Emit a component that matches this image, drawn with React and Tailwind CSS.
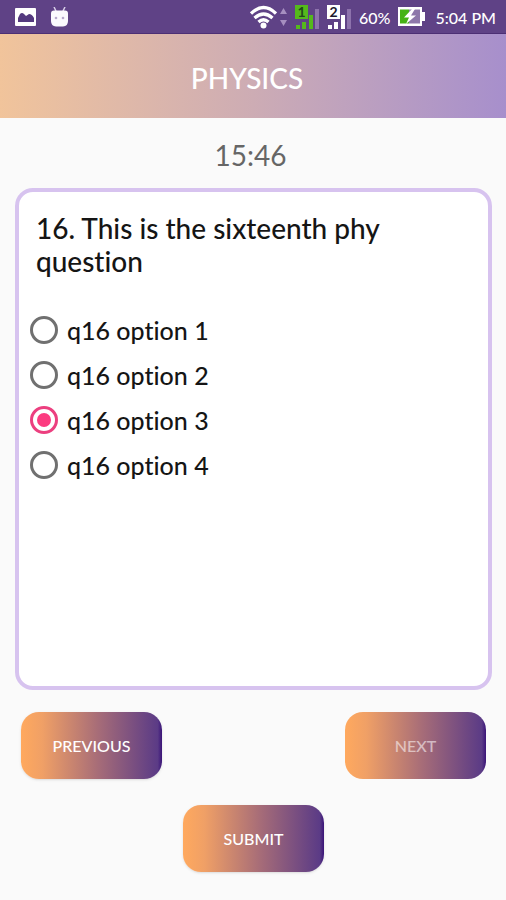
import { useState } from "react";

const OPTIONS = ["q16 option 1", "q16 option 2", "q16 option 3", "q16 option 4"];

function ImageIcon() {
  return (
    <svg className="h-[18px] w-[21px]" viewBox="0 0 21 18" aria-hidden="true">
      <rect width="21" height="18" rx="1" fill="#fff" />
      <path d="M3 14V10l2-4q2-2 4 0l2 2 3-2q3 0 5 4v4z" fill="#54397f" />
    </svg>
  );
}

function AndroidIcon() {
  return (
    <svg className="h-5 w-[17px]" viewBox="0 0 17 20" aria-hidden="true">
      <path d="M3 0l2 4M14 0l-2 4" stroke="#d9cfe8" strokeWidth="1.5" />
      <path d="M3 3.500h11q3 0 3 3V14q0 5-5 5.500H5q-5-.5-5-5.500V6.500q0-3 3-3z" fill="#fbf9fe" />
      <circle cx="5" cy="11" r="1.300" fill="#b7a8cc" />
      <circle cx="12" cy="11" r="1.300" fill="#b7a8cc" />
    </svg>
  );
}

function WifiIcon() {
  return (
    <svg className="h-6 w-[27px]" viewBox="0 0 27 24" fill="none" aria-hidden="true">
      <path d="M1 8.500Q13.500-3.500 26 8.500M4.500 13q9-8 18 0M8.500 17q5-4.500 10 0" stroke="#fff" strokeWidth="3.300" />
      <circle cx="13.500" cy="20.500" r="3" fill="#fff" />
    </svg>
  );
}

function DataArrows() {
  return (
    <svg className="h-[18px] w-[7px]" viewBox="0 0 7 18" fill="#a68fc0" aria-hidden="true">
      <path d="M3.500 0L7 6H0zM3.500 18L0 12h7z" />
    </svg>
  );
}

function SignalIcon({ sim, color, ink }) {
  return (
    <svg className="h-[26px] w-6" viewBox="0 0 24 26" aria-hidden="true">
      <rect y="1" width="13" height="14" fill={color} />
      <text x="6.500" y="13" textAnchor="middle" fill={ink} className="font-['Lato',sans-serif] text-[14px] font-bold">
        {sim}
      </text>
      <path d="M1 21h4v4H1zM7 18h4v7H7zM14 11h4v14h-4z" fill={color} />
      <path d="M20 5h4v20h-4z" fill="#8d72ac" />
    </svg>
  );
}

function BatteryIcon() {
  return (
    <svg className="h-[19px] w-[27px]" viewBox="0 0 27 19" aria-hidden="true">
      <path d="M0 0h24v5h3v9h-3v5H0z" fill="#fff" />
      <path d="M2 2.500h9v14H2z" fill="#45b215" />
      <path d="M11 2.500h11v14H11z" fill="#8e78aa" />
      <path d="M14 2L6 10.500h5L8 17l10-8.500h-5L17 2z" fill="#fff" />
    </svg>
  );
}

function StatusBar() {
  return (
    <div className="flex h-[34px] items-center justify-between border-b border-[#4c2f74] bg-[#5f4286] pr-[10px] pl-[15px] text-white">
      <div className="flex items-center gap-[15px]">
        <ImageIcon />
        <AndroidIcon />
      </div>
      <div className="flex items-center gap-2">
        <div className="flex items-center gap-[3px]">
          <WifiIcon />
          <DataArrows />
        </div>
        <SignalIcon sim="1" color="#55b91c" ink="#214a1b" />
        <SignalIcon sim="2" color="#ffffff" ink="#221a2c" />
        <span className="pt-[3px] text-base leading-5 font-medium">60%</span>
        <BatteryIcon />
        <span className="pt-[3px] pl-[2px] text-base leading-5 font-medium">5:04 PM</span>
      </div>
    </div>
  );
}

function GradientButton({ children, disabled = false }) {
  return (
    <button
      type="button"
      disabled={disabled}
      className="h-[67px] w-[141px] rounded-[18px] bg-[linear-gradient(to_right,#ffa95e,#f0a066_15%,#a66c78_55%,#5b3b86_97%,#3a1478)] text-base font-medium text-white shadow-sm disabled:text-white/55 disabled:shadow-none"
    >
      {children}
    </button>
  );
}

export default function App() {
  const [selected, setSelected] = useState(2);

  return (
    <div className="flex min-h-screen flex-col bg-[#fafafa] font-['Lato','Noto_Sans',sans-serif] [font-variant-ligatures:none]">
      <StatusBar />
      <header className="flex h-[84px] items-center justify-center bg-linear-to-r from-[#f1c49b] via-[#cdacb4] to-[#a78fcc] pt-1 pr-3">
        <h1 className="text-[28px] leading-8 font-medium text-white">PHYSICS</h1>
      </header>
      <main className="flex flex-1 flex-col pr-[14px] pb-7 pl-[15px]">
        <div className="flex h-[70px] items-center justify-center pt-[3px] pr-[6px] text-[28px] leading-9 text-[#666]">
          15:46
        </div>
        <fieldset className="flex-1 rounded-[18px] border-4 border-[#d7c3ef] bg-white px-[11px] pt-5">
          <h2 className="px-[6px] text-[28px] leading-[33px] font-medium text-[#151515]">
            16. This is the sixteenth phy question
          </h2>
          <div className="mt-[29px] flex flex-col">
            {OPTIONS.map((label, i) => (
              <label key={label} className="flex h-[45px] items-center gap-[9px] text-[25px] leading-8 font-medium text-[#151515]">
                <input
                  type="radio"
                  name="answer"
                  checked={selected === i}
                  onChange={() => setSelected(i)}
                  className="size-7 appearance-none rounded-full border-3 border-[#707070] bg-white bg-clip-content p-1 checked:border-[#ec3f7f] checked:bg-[#fc3b80]"
                />
                {label}
              </label>
            ))}
          </div>
        </fieldset>
        <div className="mt-[22px] flex justify-between px-[6px]">
          <GradientButton>PREVIOUS</GradientButton>
          <GradientButton disabled>NEXT</GradientButton>
        </div>
        <div className="mt-[26px] flex justify-center">
          <GradientButton>SUBMIT</GradientButton>
        </div>
      </main>
    </div>
  );
}
